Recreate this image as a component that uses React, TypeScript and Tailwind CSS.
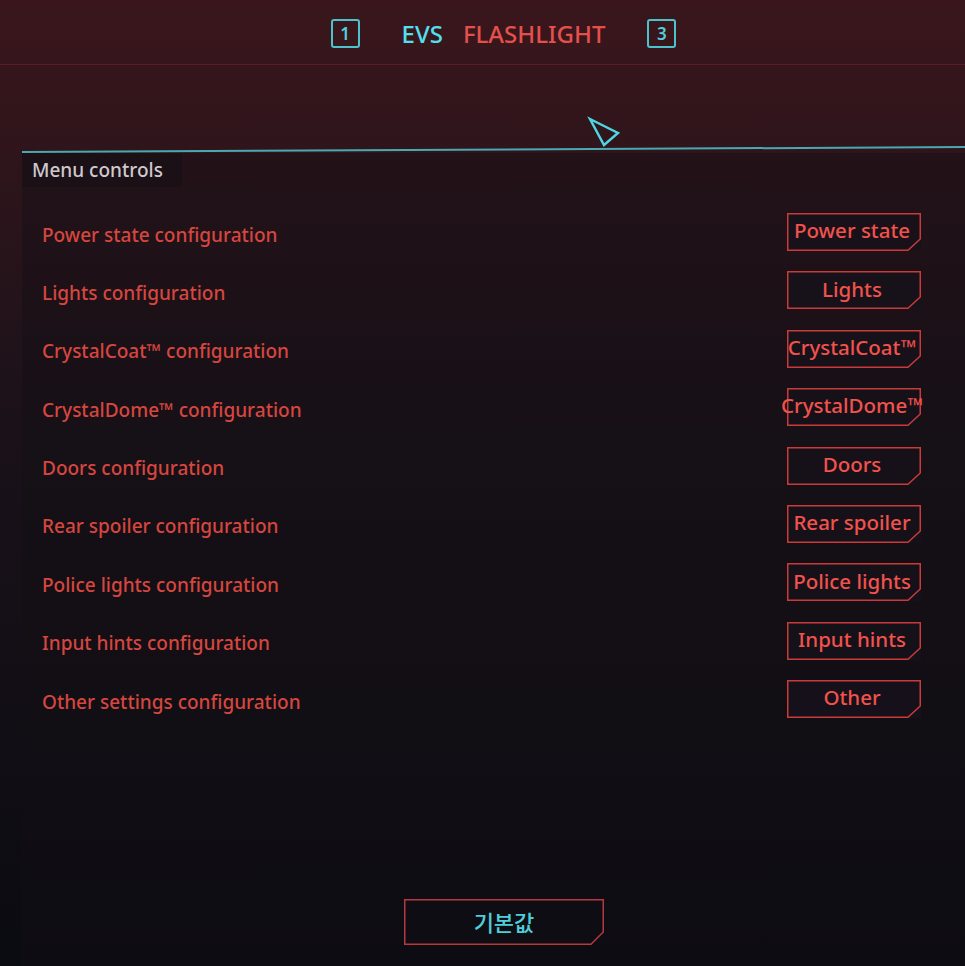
const rows = [
	{ label: "Power state configuration", button: "Power state" },
	{ label: "Lights configuration", button: "Lights" },
	{ label: "CrystalCoat™ configuration", button: "CrystalCoat™" },
	{ label: "CrystalDome™ configuration", button: "CrystalDome™" },
	{ label: "Doors configuration", button: "Doors" },
	{ label: "Rear spoiler configuration", button: "Rear spoiler" },
	{ label: "Police lights configuration", button: "Police lights" },
	{ label: "Input hints configuration", button: "Input hints" },
	{ label: "Other settings configuration", button: "Other" },
];

function CfgButton({ text }: { text: string }) {
	return (
		<div className="relative w-[134px] h-[38px] bg-[#16121a]/80 flex items-center justify-center">
			<svg className="absolute inset-0 pointer-events-none" width="134" height="38" viewBox="0 0 134 38">
				<polygon points="0.75,0.75 133.25,0.75 133.25,26 121,37.25 0.75,37.25" fill="none" stroke="#c93a3a" strokeWidth="1.5" />
			</svg>
			<span className="relative whitespace-nowrap text-[20.5px] font-medium leading-none text-[#f2524c] -mt-[3px] -ml-[4px]">{text}</span>
		</div>
	);
}

export default function App() {
	return (
		<div className="relative w-[965px] h-[966px] overflow-hidden bg-gradient-to-b from-[#3a161c] via-[#1a1119] via-45% to-[#0b0b12] font-['Noto_Sans',sans-serif]">
			{/* header tabs */}
			<div className="h-[65px] border-b border-[#5a1d22] flex items-center justify-center pl-[42px] pt-[3px]">
				<div className="flex items-center">
					<div className="w-[29px] h-[29px] border-2 border-[#4cc3cc] rounded-[3px] flex items-center justify-center text-[#4fd0da] text-[17px] font-semibold leading-none">1</div>
					<span className="ml-[42px] text-[24px] font-medium leading-none text-[#52e0ef]">EVS</span>
					<span className="ml-[20px] text-[24px] font-medium leading-none text-[#e4504b]">FLASHLIGHT</span>
					<div className="ml-[42px] w-[29px] h-[29px] border-2 border-[#4cc3cc] rounded-[3px] flex items-center justify-center text-[#4fd0da] text-[17px] font-semibold leading-none">3</div>
				</div>
			</div>

			{/* cursor */}
			<svg className="absolute left-[586px] top-[116px]" width="36" height="34" viewBox="0 0 36 34">
				<path d="M4 3 L32 17 L18 29 Z" fill="none" stroke="#4fd6e4" strokeWidth="2.4" strokeLinejoin="miter" />
			</svg>

			{/* panel */}
			<div className="relative mt-[88px] ml-[22px] bg-[#120e15]/40">
				<div className="absolute -top-[2px] left-0 right-0 h-[2px] bg-[#4aa9b0] -rotate-[0.3deg] origin-left" />
				<div className="h-[34px] w-[160px] bg-[#150f16]/60 flex items-center pl-[10px] text-[19px] font-medium text-[#cfc9cd]">
					Menu controls
				</div>
				<div className="flex flex-col pt-[26px] pl-[20px] pr-[44px] gap-[20.4px]">
					{rows.map((r) => (
						<div key={r.label} className="flex items-center justify-between h-[38px]">
							<span className="text-[19px] font-medium text-[#d6463f] leading-none mt-[6px]">{r.label}</span>
							<CfgButton text={r.button} />
						</div>
					))}
				</div>
				<div className="h-[300px]" />
			</div>

			{/* default button */}
			<div className="absolute left-[404px] top-[899px] w-[200px] h-[46px] flex items-center justify-center">
				<svg className="absolute inset-0" width="200" height="46" viewBox="0 0 200 46">
					<polygon points="0.75,0.75 199.25,0.75 199.25,33 187,45.25 0.75,45.25" fill="#0e0d13" stroke="#b8383c" strokeWidth="1.5" />
				</svg>
				<span className="relative text-[22px] font-medium text-[#4fcfdc] leading-none font-['Noto_Sans_CJK_KR',sans-serif] -mt-[2px]">기본값</span>
			</div>
		</div>
	);
}
